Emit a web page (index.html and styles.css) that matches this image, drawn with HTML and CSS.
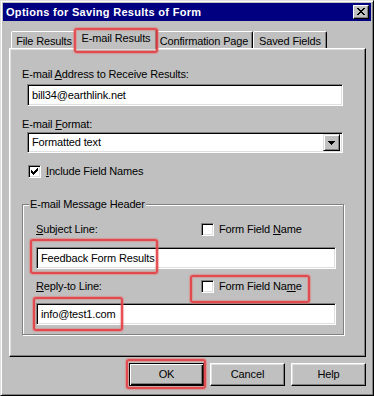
FILE: index.html
```html
<!DOCTYPE html>
<html>
<head>
<meta charset="utf-8">
<link rel="stylesheet" href="styles.css">
</head>
<body>
<div class="window">
  <div class="titlebar">
    <span class="title">Options for Saving Results of Form</span>
    <span class="close">
      <svg width="8" height="7" viewBox="0 0 8 7" shape-rendering="crispEdges"><path d="M0 0h2v1h-2zM6 0h2v1h-2zM1 1h2v1h-2zM5 1h2v1h-2zM2 2h4v1h-4zM3 3h2v1h-2zM2 4h4v1h-4zM1 5h2v1h-2zM5 5h2v1h-2zM0 6h2v1h-2zM6 6h2v1h-2z" fill="#000"/></svg>
    </span>
  </div>

  <div class="tabs">
    <div class="tab t1">File Results</div>
    <div class="tab sel">E-mail Results</div>
    <div class="tab t3">Confirmation Page</div>
    <div class="tab t4">Saved Fields</div>
  </div>

  <div class="panel">
    <div class="label l1">E-mail <u>A</u>ddress to Receive Results:</div>
    <div class="input wide">bill34@earthlink.net</div>
    <div class="label l2">E-mail <u>F</u>ormat:</div>
    <div class="input wide select">
      <span class="seltext">Formatted text</span>
      <span class="ddbtn"><svg width="7" height="4" viewBox="0 0 7 4" shape-rendering="crispEdges"><path d="M0 0h7v1h-7zM1 1h5v1h-5zM2 2h3v1h-3zM3 3h1v1h-1z" fill="#000"/></svg></span>
    </div>
    <div class="check-row cr1">
      <span class="cbox"><svg width="7" height="7" viewBox="0 0 7 7" shape-rendering="crispEdges"><path d="M0 2h1v3h-1zM1 3h1v3h-1zM2 4h1v3h-1zM3 3h1v3h-1zM4 2h1v3h-1zM5 1h1v3h-1zM6 0h1v3h-1z" fill="#000"/></svg></span>
      <span><u>I</u>nclude Field Names</span>
    </div>

    <fieldset class="group">
      <legend>E-mail Message Header</legend>
      <div class="row">
        <span class="label"><u>S</u>ubject Line:</span>
        <span class="check-row"><span class="cbox"></span><span>Form Field <u>N</u>ame</span></span>
      </div>
      <div class="input narrow gi1">Feedback Form Results</div>
      <div class="row r2">
        <span class="label"><u>R</u>eply-to Line:</span>
        <span class="check-row"><span class="cbox"></span><span>Form Field Na<u>m</u>e</span></span>
      </div>
      <div class="input narrow gi2">info@test1.com</div>
    </fieldset>
  </div>

  <div class="buttons">
    <div class="btn default">OK</div>
    <div class="btn">Cancel</div>
    <div class="btn">Help</div>
  </div>

  <div class="mark m1"></div>
  <div class="mark m2"></div>
  <div class="mark m3"></div>
  <div class="mark m4"></div>
  <div class="mark m5"></div>
</div>
</body>
</html>
```

FILE: styles.css
```css
html, body {
  margin: 0;
  padding: 0;
  background: #c0c0c0;
}
body {
  font-family: "Liberation Sans", Arial, sans-serif;
  font-size: 11px;
  line-height: 13px;
  letter-spacing: -0.15px;
  color: #000;
}
u { text-decoration: underline; text-underline-offset: 1px; }

.window {
  position: relative;
  width: 374px;
  height: 396px;
  box-sizing: border-box;
  background: #c0c0c0;
  border: 1px solid;
  border-color: #dfdfdf #000 #000 #dfdfdf;
  box-shadow: inset 1px 1px #fff, inset -1px -1px #808080;
  padding: 2px;
}

.titlebar {
  height: 18px;
  background: #000080;
  display: flex;
  align-items: center;
  justify-content: space-between;
  padding: 0 2px 0 3px;
  color: #fff;
  font-weight: bold;
  font-size: 11px;
}
.title { letter-spacing: 0.3px; }
.close {
  width: 16px;
  height: 14px;
  box-sizing: border-box;
  background: #c0c0c0;
  border: 1px solid;
  border-color: #fff #000 #000 #fff;
  box-shadow: inset -1px -1px #808080;
  display: flex;
  align-items: center;
  justify-content: center;
  padding-bottom: 1px;
}

.tabs {
  display: flex;
  align-items: flex-end;
  height: 19px;
  margin: 8px 0 0 8px;
}
.tab {
  height: 17px;
  box-sizing: border-box;
  border: 1px solid;
  border-bottom: none;
  border-color: #fff #000 transparent #fff;
  border-radius: 2px 2px 0 0;
  box-shadow: inset -1px 0 #808080;
  display: flex;
  align-items: center;
  justify-content: center;
  padding-top: 2px;
  background: #c0c0c0;
}
.t1 { width: 66px; }
.t3 { width: 98px; }
.t4 { width: 74px; }
.sel {
  width: 82px;
  height: 20px;
  margin: 0 -2px -1px -2px;
  position: relative;
  z-index: 1;
  padding-top: 0;
  padding-bottom: 2px;
}

.panel {
  margin-left: 6px;
  width: 357px;
  height: 309px;
  box-sizing: border-box;
  border: 1px solid;
  border-color: #fff #000 #000 #fff;
  box-shadow: inset -1px -1px #808080, inset 1px 1px #dfdfdf;
  padding: 19px 0 0 12px;
}

.label { white-space: nowrap; }

.input {
  box-sizing: border-box;
  height: 22px;
  background: #fff;
  border: 1px solid;
  border-color: #808080 #fff #fff #808080;
  box-shadow: inset 1px 1px #000, inset -1px -1px #dfdfdf;
  padding: 0 0 0 4px;
  display: flex;
  align-items: center;
  white-space: nowrap;
}
.wide {
  width: 316px;
  margin: 3px 0 0 5px;
}
.l2 { margin-top: 12px; }
.select {
  height: 21px;
  margin-top: 1px;
  justify-content: space-between;
  padding-right: 2px;
}
.ddbtn {
  width: 17px;
  height: 17px;
  box-sizing: border-box;
  background: #c0c0c0;
  border: 1px solid;
  border-color: #dfdfdf #000 #000 #dfdfdf;
  box-shadow: inset 1px 1px #fff, inset -1px -1px #808080;
  display: flex;
  align-items: center;
  justify-content: center;
}

.check-row {
  display: flex;
  align-items: center;
  gap: 5px;
  height: 13px;
}
.cr1 { margin: 12px 0 0 6px; }
.cbox {
  width: 13px;
  height: 13px;
  box-sizing: border-box;
  background: #fff;
  border: 1px solid;
  border-color: #808080 #fff #fff #808080;
  box-shadow: inset 1px 1px #000, inset -1px -1px #dfdfdf;
  display: flex;
  align-items: center;
  justify-content: center;
}

.group {
  margin: 20px 0 0 0;
  width: 322px;
  box-sizing: border-box;
  border: 1px solid #808080;
  box-shadow: inset 1px 1px #fff, 1px 1px #fff;
  padding: 12px 0 9px 13px;
  min-width: 0;
}
.group legend {
  padding: 0 1px;
  margin-left: -7px;
  background: #c0c0c0;
  line-height: 13px;
}
.row {
  display: grid;
  grid-template-columns: 165px auto;
  align-items: center;
  height: 13px;
}
.narrow { width: 300px; }
.gi1 { margin-top: 11px; }
.r2 { margin-top: 11px; }
.gi2 { margin-top: 10px; }

.buttons {
  display: flex;
  justify-content: flex-end;
  gap: 6px;
  margin: 6px 5px 0 0;
}
.btn {
  width: 75px;
  height: 23px;
  box-sizing: border-box;
  border: 1px solid;
  border-color: #fff #000 #000 #fff;
  box-shadow: inset -1px -1px #808080, inset 1px 1px #dfdfdf;
  display: flex;
  align-items: center;
  justify-content: center;
}
.btn.default {
  border-color: #000;
  box-shadow: inset 1px 1px #fff, inset -1px -1px #000, inset -2px -2px #808080;
}

.mark {
  position: absolute;
  box-sizing: border-box;
  border: 2px solid rgba(228, 62, 66, 0.9);
  border-radius: 3px;
  box-shadow: 0 0 1px 1px rgba(235, 110, 110, 0.5), inset 0 0 1px 1px rgba(235, 110, 110, 0.4);
  z-index: 5;
}
.m1 { left: 73px; top: 27px; width: 84px; height: 25px; }
.m2 { left: 29px; top: 238px; width: 128px; height: 35px; }
.m3 { left: 189px; top: 274px; width: 120px; height: 28px; }
.m4 { left: 32px; top: 296px; width: 90px; height: 34px; }
.m5 { left: 125px; top: 358px; width: 80px; height: 30px; }
```
